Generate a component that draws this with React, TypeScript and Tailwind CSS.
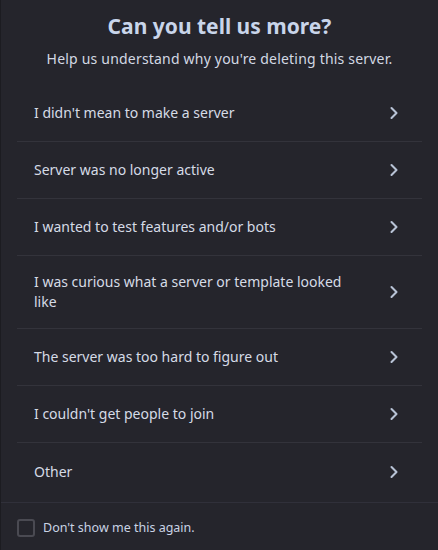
import React from 'react';
import { ChevronRight } from 'lucide-react';

const reasons = [
  "I didn't mean to make a server",
  'Server was no longer active',
  'I wanted to test features and/or bots',
  'I was curious what a server or template looked like',
  'The server was too hard to figure out',
  "I couldn't get people to join",
  'Other',
];

const App = () => {
  return (
    <div
      className="w-[438px] h-[550px] bg-[#25252c] border-l border-[#1c1c21] flex flex-col text-[#d5dbe6]"
      style={{ fontFamily: '"Noto Sans", "Open Sans", sans-serif' }}
    >
      {/* Header */}
      <div className="pt-[12px] flex flex-col items-center">
        <h1 className="text-[21px] leading-[28px] font-bold text-[#c9d5ea]">Can you tell us more?</h1>
        <p className="mt-[9px] text-[14px] leading-[20px] text-[#d3d9e4] tracking-[0.2px]">
          Help us understand why you're deleting this server.
        </p>
      </div>

      {/* Reasons */}
      <div className="mt-[16px] px-[16px] flex-1">
        {reasons.map((reason, i) => (
          <button
            key={i}
            className={`w-full min-h-[57px] flex items-center justify-between py-[16px] pl-[17px] pr-[18px] text-left ${
              i < reasons.length - 1 ? 'border-b border-[#33333b]' : ''
            }`}
          >
            <span className="text-[14px] leading-[20px] max-w-[330px] text-[#d5dbe6]">{reason}</span>
            <ChevronRight className="w-[20px] h-[20px] text-[#b8c3d6] shrink-0" strokeWidth={2.5} />
          </button>
        ))}
      </div>

      {/* Footer */}
      <div className="h-[48px] border-t border-[#30303a] flex items-center gap-[8px] px-[16px] pt-[3px]">
        <div className="w-[18px] h-[18px] rounded-[3px] border-2 border-[#4a4a52]" />
        <span className="text-[12.5px] text-[#c9d3e4]">Don't show me this again.</span>
      </div>
    </div>
  );
};

export default App;
